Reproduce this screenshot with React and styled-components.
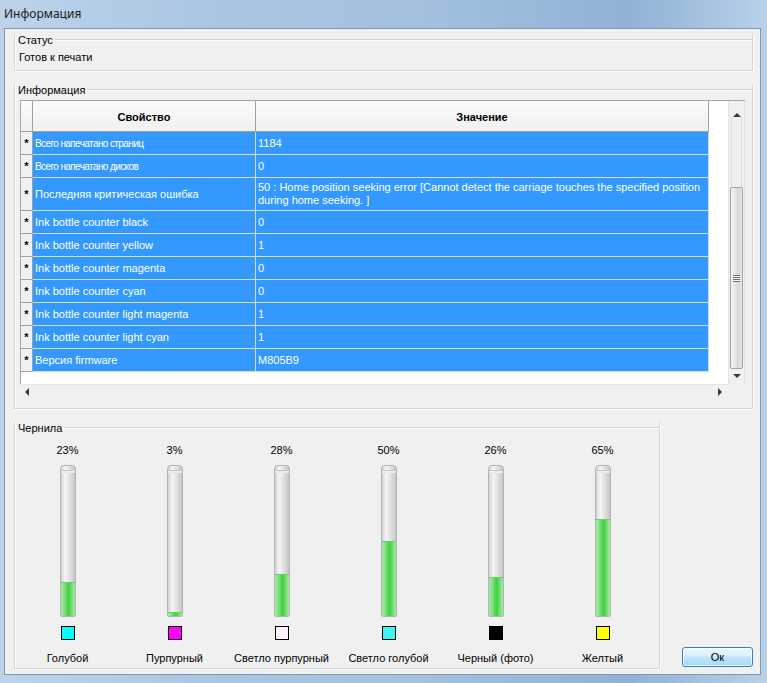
import React from "react";
import styled, { createGlobalStyle } from "styled-components";

const GlobalStyle = createGlobalStyle`
  html, body { margin: 0; padding: 0; }
  body {
    width: 767px;
    height: 683px;
    overflow: hidden;
    font-family: "Liberation Sans", Arial, sans-serif;
    font-size: 11px;
    color: #000;
  }
`;

const Window = styled.div`
  width: 767px;
  height: 683px;
  display: flex;
  flex-direction: column;
  background: linear-gradient(90deg, #bcd3ea 0%, #a9c5e2 30%, #a2c1df 55%, #8fb2d6 82%, #b9d0e8 100%);
`;

const TitleBar = styled.div`
  height: 28px;
  display: flex;
  align-items: center;
  padding: 0 0 2px 4px;
  box-sizing: border-box;
  font-family: "Noto Sans", "Open Sans", sans-serif;
  font-size: 12px;
  color: #1a1a1a;
`;

const Middle = styled.div`
  flex: 1;
  display: flex;
  padding: 0 7px 0 4px;
`;

const BottomFrame = styled.div`
  height: 8px;
`;

const Client = styled.div`
  flex: 1;
  display: flex;
  flex-direction: column;
  background: #f0f0f0;
  border: 1px solid #7f97b3;
  padding: 0 7px 0 9px;
`;

const Group = styled.div`
  display: flex;
  flex-direction: column;
  border: 1px solid #d5d5d5;
  border-top: none;
  box-shadow: inset 1px 0 #fff, 1px 1px #fff;
  margin-top: ${p => p.$top}px;
  padding: 0 ${p => p.$padX || 0}px ${p => p.$padBottom || 0}px;
  width: ${p => (p.$width ? `${p.$width}px` : "auto")};
  box-sizing: border-box;
`;

const Legend = styled.div`
  display: flex;
  align-items: center;
  height: 12px;
  margin: 0 -${p => p.$padX || 0}px;
  padding-left: ${p => p.$indent || 3}px;
  &::after {
    content: "";
    flex: 1;
    margin-left: 2px;
    border-top: 1px solid #d5d5d5;
    border-bottom: 1px solid #fff;
  }
`;

const StatusValue = styled.div`
  height: 12px;
  line-height: 12px;
  margin: 5px 0 7px 4px;
`;

const Grid = styled.div`
  display: flex;
  flex-direction: column;
  margin-top: 4px;
  width: 725px;
  height: 299px;
  border-top: 1px solid #a6a6a6;
  box-sizing: border-box;
`;

const GridTop = styled.div`
  flex: 1;
  display: flex;
`;

const Viewport = styled.div`
  flex: 1;
  background: #fff;
  border-left: 1px solid #a6a6a6;
`;

const Table = styled.div`
  display: grid;
  grid-template-columns: 12px 223px 453px;
  grid-auto-rows: auto;
`;

const HeadCell = styled.div`
  height: 31px;
  box-sizing: border-box;
  background: linear-gradient(#fbfbfb, #f0f0f0);
  border-right: 1px solid #a0a0a0;
  border-bottom: 1px solid #a0a0a0;
  display: flex;
  align-items: center;
  justify-content: center;
  padding-top: 1px;
  font-weight: bold;
`;

const RowHead = styled.div`
  height: ${p => (p.$tall ? 33 : 23)}px;
  box-sizing: border-box;
  background: #f0f0f0;
  border-right: 1px solid #a0a0a0;
  border-bottom: 1px solid #a0a0a0;
  display: flex;
  align-items: center;
  justify-content: center;
  font-weight: bold;
  font-size: 11px;
`;

const Cell = styled.div`
  height: ${p => (p.$tall ? 33 : 23)}px;
  box-sizing: border-box;
  background: #3399ff;
  color: #fff;
  border-right: 1px solid #d7ddc0;
  border-bottom: 1px solid #d7ddc0;
  display: flex;
  align-items: center;
  padding-left: 2px;
  line-height: 13px;
  white-space: nowrap;
  font-size: ${p => (p.$tight ? "10px" : "11px")};
  letter-spacing: ${p => (p.$tight ? "-0.6px" : "normal")};
`;

const Row = styled.div`
  display: contents;
`;

const VScroll = styled.div`
  width: 17px;
  display: flex;
  flex-direction: column;
  background: #f0f0f0;
  border-left: 1px solid #e3e3e3;
  border-right: 1px solid #e3e3e3;
  box-sizing: border-box;
`;

const ArrowBtn = styled.div`
  height: ${p => p.$h}px;
  display: flex;
  align-items: ${p => p.$align || "center"};
  justify-content: center;
`;

const Track = styled.div`
  height: ${p => p.$h}px;
  border-left: 1px solid #dcdcdc;
  border-right: 1px solid #dcdcdc;
  margin: 0 2px;
`;

const Thumb = styled.div`
  height: 182px;
  margin: 0 1px;
  border: 1px solid #a3a3a3;
  border-radius: 2px;
  background: linear-gradient(90deg, #f2f2f2, #e6e6e6 40%, #d8d8d8 60%, #e4e4e4);
  display: flex;
  align-items: center;
  justify-content: center;
  box-sizing: border-box;
`;

const Grip = styled.div`
  width: 7px;
  height: 7px;
  background: repeating-linear-gradient(#6b6b6b 0 1px, #fafafa 1px 2px);
`;

const GridBottom = styled.div`
  height: 15px;
  display: flex;
`;

const HScroll = styled.div`
  flex: 1;
  display: flex;
  align-items: center;
  justify-content: space-between;
  padding: 0 6px 0 5px;
  background: #f0f0f0;
  border-top: 1px solid #e6e6e6;
`;

const Corner = styled.div`
  width: 17px;
  background: #f0f0f0;
`;

const BottomRow = styled.div`
  display: flex;
  align-items: flex-end;
`;

const Inks = styled.div`
  display: grid;
  grid-template-columns: repeat(6, 107px);
  margin: 10px 0 0 -1px;
`;

const InkCol = styled.div`
  display: flex;
  flex-direction: column;
  align-items: center;
`;

const Percent = styled.div`
  height: 12px;
  line-height: 12px;
`;

const Tube = styled.div`
  margin-top: 9px;
  width: 16px;
  height: 152px;
  box-sizing: border-box;
  border: 1px solid #b3b3b3;
  border-radius: 4px 4px 2px 2px;
  background: linear-gradient(90deg, #d2d2d2, #f5f5f5 30%, #e2e2e2 60%, #c6c6c6);
  display: flex;
  flex-direction: column;
  justify-content: space-between;
  overflow: hidden;
  &::before {
    content: "";
    height: 4px;
    border-bottom: 1px solid #c8c8c8;
    box-shadow: 0 2px #ececec;
  }
`;

const Fill = styled.div`
  background: linear-gradient(90deg, #a6eaa6, #7fe07f 25%, #3fd03f 55%, #79de79 80%, #aaeaaa);
  border-top: 1px solid #62d462;
  box-sizing: border-box;
`;

const Swatch = styled.div`
  margin-top: 9px;
  width: 14px;
  height: 14px;
  box-sizing: border-box;
  border: 1px solid #000;
  background: ${p => p.$color};
`;

const InkName = styled.div`
  margin-top: 12px;
  height: 12px;
  line-height: 12px;
  white-space: nowrap;
`;

const OkButton = styled.button`
  width: 71px;
  height: 20px;
  margin: 0 0 2px 22px;
  padding: 0;
  border: 1px solid #3c7fb1;
  border-radius: 3px;
  background: linear-gradient(#eaf6fd 0%, #d9f0fc 45%, #bee6fd 50%, #a7d9f5 100%);
  box-shadow: inset 0 0 0 1px rgba(255, 255, 255, 0.7);
  font-family: "Liberation Sans", Arial, sans-serif;
  font-size: 11px;
  color: #000;
`;

const Tri = ({ dir }) => {
  const pts = {
    up: "0,4 4,0 8,4",
    down: "0,0 8,0 4,4",
    left: "4,0 4,8 0,4",
    right: "0,0 0,8 4,4",
  }[dir];
  const vertical = dir === "up" || dir === "down";
  return (
    <svg width={vertical ? 8 : 4} height={vertical ? 4 : 8} viewBox={vertical ? "0 0 8 4" : "0 0 4 8"}>
      <polygon points={pts} fill="#3a3a3a" />
    </svg>
  );
};

const rows = [
  { name: "Всего напечатано страниц", value: "1184", tight: true },
  { name: "Всего напечатано дисков", value: "0", tight: true },
  {
    name: "Последняя критическая ошибка",
    value: [
      "50 : Home position seeking error [Cannot detect the carriage touches the specified position",
      "during home seeking. ]",
    ],
  },
  { name: "Ink bottle counter black", value: "0" },
  { name: "Ink bottle counter yellow", value: "1" },
  { name: "Ink bottle counter magenta", value: "0" },
  { name: "Ink bottle counter cyan", value: "0" },
  { name: "Ink bottle counter light magenta", value: "1" },
  { name: "Ink bottle counter light cyan", value: "1" },
  { name: "Версия firmware", value: "M805B9" },
];

const inks = [
  { pct: 23, color: "#00ffff", name: "Голубой" },
  { pct: 3, color: "#ff00ff", name: "Пурпурный" },
  { pct: 28, color: "#fff0ff", name: "Светло пурпурный" },
  { pct: 50, color: "#40f4f4", name: "Светло голубой" },
  { pct: 26, color: "#000000", name: "Черный (фото)" },
  { pct: 65, color: "#ffff00", name: "Желтый" },
];

const PropertyGrid = () => (
  <Grid>
    <GridTop>
      <Viewport>
        <Table>
          <HeadCell />
          <HeadCell>Свойство</HeadCell>
          <HeadCell>Значение</HeadCell>
          {rows.map(({ name, value, tight }) => {
            const tall = Array.isArray(value);
            return (
              <Row key={name}>
                <RowHead $tall={tall}>*</RowHead>
                <Cell $tall={tall} $tight={tight}>{name}</Cell>
                <Cell $tall={tall}>
                  {tall ? (
                    <span>
                      {value[0]}
                      <br />
                      {value[1]}
                    </span>
                  ) : (
                    value
                  )}
                </Cell>
              </Row>
            );
          })}
        </Table>
      </Viewport>
      <VScroll>
        <ArrowBtn $h={16} $align="flex-end">
          <Tri dir="up" />
        </ArrowBtn>
        <Track $h={70} />
        <Thumb>
          <Grip />
        </Thumb>
        <ArrowBtn $h={14}>
          <Tri dir="down" />
        </ArrowBtn>
      </VScroll>
    </GridTop>
    <GridBottom>
      <HScroll>
        <Tri dir="left" />
        <Tri dir="right" />
      </HScroll>
      <Corner />
    </GridBottom>
  </Grid>
);

const App = () => (
  <>
    <GlobalStyle />
    <Window>
      <TitleBar>Информация</TitleBar>
      <Middle>
        <Client>
          <Group $top={5}>
            <Legend $indent={3}>Статус</Legend>
            <StatusValue>Готов к печати</StatusValue>
          </Group>

          <Group $top={13} $padX={5} $padBottom={9}>
            <Legend $padX={5} $indent={3}>Информация</Legend>
            <PropertyGrid />
          </Group>

          <BottomRow>
            <Group $top={13} $width={646} $padBottom={4}>
              <Legend $indent={3}>Чернила</Legend>
              <Inks>
                {inks.map(ink => (
                  <InkCol key={ink.name}>
                    <Percent>{ink.pct}%</Percent>
                    <Tube>
                      <Fill style={{ height: `${ink.pct}%` }} />
                    </Tube>
                    <Swatch $color={ink.color} />
                    <InkName>{ink.name}</InkName>
                  </InkCol>
                ))}
              </Inks>
            </Group>
            <OkButton>Ок</OkButton>
          </BottomRow>
        </Client>
      </Middle>
      <BottomFrame />
    </Window>
  </>
);

export default App;
